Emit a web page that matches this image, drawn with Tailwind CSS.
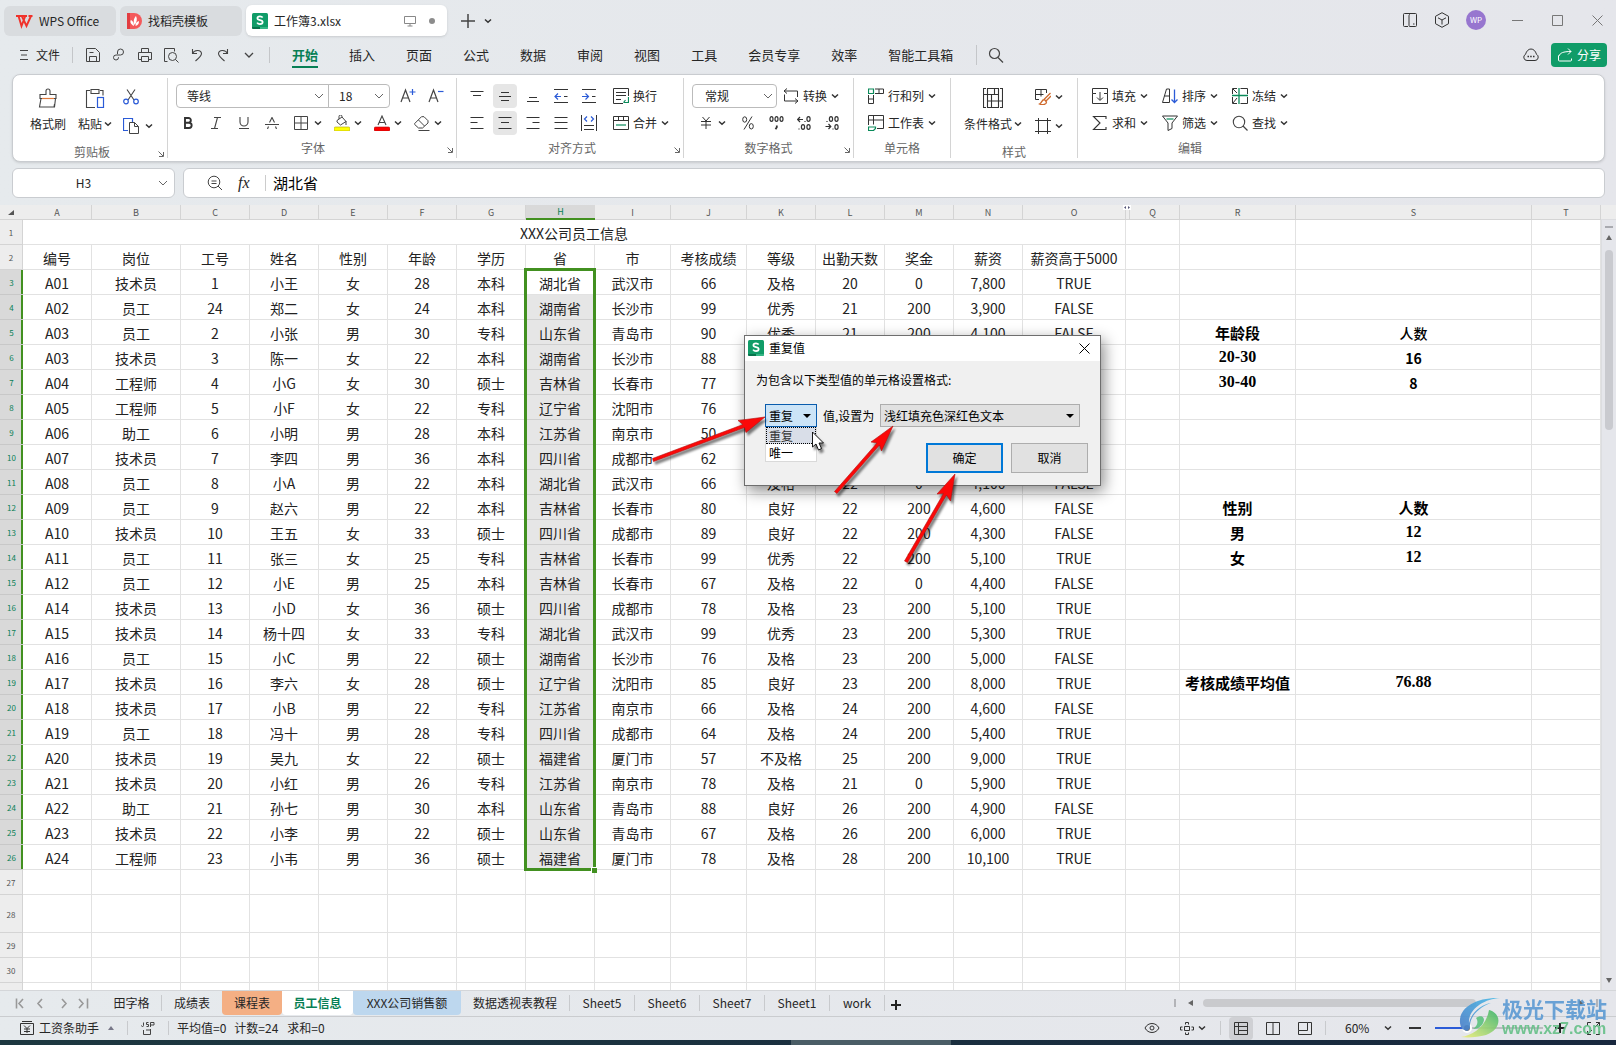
<!DOCTYPE html>
<html lang="zh-CN">
<head>
<meta charset="utf-8">
<title>工作簿3.xlsx - WPS Office</title>
<script src="https://cdn.jsdelivr.net/npm/@tailwindcss/browser@4"></script>
</head>
<body class="relative flex h-screen flex-col overflow-hidden bg-linear-to-r from-[#e6eaed] to-[#e5e6eb] font-['Noto_Sans_CJK_SC',sans-serif] text-xs text-[#262626]">

<svg class="hidden">
  <symbol id="dn" viewBox="0 0 8 8"><path d="M1 2.500 4 5.300 7 2.500" fill="none" stroke="#333" stroke-width="1.500"/></symbol>
  <symbol id="chev" viewBox="0 0 10 10"><path d="M1 3 5 7 9 3" fill="none" stroke="#666" stroke-width="1"/></symbol>
  <symbol id="launch" viewBox="0 0 8 8"><path d="M1.500 1.500 6 6M6.500 2v4.500H2" fill="none" stroke="#666"/></symbol>
  <symbol id="wpss" viewBox="0 0 16 16"><rect width="16" height="16" rx="1.500" fill="#109c68"/><path d="M0 14h8v2H1.500A1.500 1.500 0 0 1 0 14.500Z" fill="#06744b"/><path d="M8 14h8v.5a1.500 1.500 0 0 1-1.500 1.500H8Z" fill="#35b685"/><path d="M10.700 4.600C10 3.700 9.100 3.300 8 3.300c-1.500 0-2.600.7-2.600 1.900 0 2.600 5.300 1.200 5.300 3.900 0 1.200-1.200 2-2.700 2-1.300 0-2.300-.5-2.900-1.500" fill="none" stroke="#fff" stroke-width="1.700"/></symbol>
</svg>

<!-- Title bar -->
<header class="flex h-9 shrink-0 items-end pl-1">
  <button class="mr-1 flex h-[30px] w-28 items-center rounded-md bg-[#d9dcdf] pl-3">
    <svg class="mr-[6px] h-4 w-[17px]" viewBox="0 0 17 16"><path d="M0 3h11M12.500 3h4M2.500 3l3 10L9.300 3M5.800 3l4.700 10L15 3" fill="none" stroke="#f0322b" stroke-width="1.900"/></svg>WPS Office
  </button>
  <button class="mr-1 flex h-[30px] w-[122px] items-center rounded-md bg-[#d9dcdf] pl-[7px]">
    <svg class="mr-[6px] h-4 w-[15px]" viewBox="0 0 15 16"><path d="M0 0h7a8 8 0 0 1 0 16H0Z" fill="#f4595b"/><path d="M0 0h3v16H0Z" fill="#e23c40"/><path d="M7 13C3 11 3 8 4 7c2 1 3 3 3 6Zm.500-1C6 8 7 5 9 3c1.500 3 1 6-1.500 9Zm1 1c0-3 1-4 3.500-5 0 3-1 4-3.500 5Z" fill="#fff"/></svg>找稻壳模板
  </button>
  <div class="flex h-[31px] w-[201px] items-center rounded-md bg-white pl-[6px] shadow">
    <svg class="mr-[6px] h-4 w-4"><use href="#wpss"/></svg>
    <span class="flex-1">工作簿3.xlsx</span>
    <svg class="mr-[13px] h-3 w-3" viewBox="0 0 12 12"><path d="M.5 1.500h11v7H.5ZM6 8.500v2.500M3.500 11h5" fill="none" stroke="#888"/></svg>
    <span class="mr-3 h-[6px] w-[6px] rounded-full bg-[#8c8c8c]"></span>
  </div>
  <button class="ml-[14px] flex h-[30px] items-center" aria-label="新建">
    <svg class="h-[14px] w-[14px]" viewBox="0 0 14 14"><path d="M7 0v14M0 7h14" stroke="#444" stroke-width="1.500"/></svg>
    <svg class="ml-[9px] h-2 w-2"><use href="#dn"/></svg>
  </button>
  <div class="ml-auto mb-[1px] flex h-[30px] items-center pr-[13px]">
    <svg class="mr-4 h-4 w-4" viewBox="0 0 16 16"><path d="M6 14.500H2.500a1 1 0 0 1-1-1v-11a1 1 0 0 1 1-1h11a1 1 0 0 1 1 1v11a1 1 0 0 1-1 1H8a1 1 0 0 1-1-1v-10a1 1 0 0 1 1-1M11 12h1.500" fill="none" stroke="#333"/></svg>
    <svg class="mr-4 h-4 w-4" viewBox="0 0 16 16"><path d="M8 .7 14.500 4.300v7.400L8 15.300 1.500 11.700V4.300ZM4 5.800l4 2.200 4-2.200M8 8v4.500" fill="none" stroke="#333"/></svg>
    <span class="mr-[26px] flex h-5 w-5 items-center justify-center rounded-full bg-[#9776cf] text-[8px] text-white">WP</span>
    <svg class="mr-[29px] h-[11px] w-[11px]" viewBox="0 0 11 11"><path d="M0 5.500h11" stroke="#777"/></svg>
    <svg class="mr-[29px] h-[11px] w-[11px]" viewBox="0 0 11 11"><path d="M.5.5h10v10H.5Z" fill="none" stroke="#777"/></svg>
    <svg class="h-[11px] w-[11px]" viewBox="0 0 11 11"><path d="m.5.5 10 10m0-10-10 10" stroke="#777"/></svg>
  </div>
</header>

<!-- Menu bar -->
<div class="flex h-[38px] shrink-0 items-center pl-5">
  <button class="flex items-center gap-2"><svg class="h-3 w-2" viewBox="0 0 8 12"><path d="M0 1.500h8M1 6h6M0 10.500h8" stroke="#444"/></svg>文件</button>
  <span class="ml-[12px] mr-[7px] h-4 w-px bg-[#c4c6c9]"></span>
  <button class="flex w-[26px] justify-center" aria-label="保存"><svg class="h-4 w-4" viewBox="0 0 16 16"><path d="M1.500 14.500v-13h9l4 4v9ZM4.500 14v-4.500h7V14M4.500 5.500h4" fill="none" stroke="#444"/></svg></button>
  <button class="flex w-[26px] justify-center" aria-label="输出"><svg class="h-[14px] w-[14px]" viewBox="0 0 14 14"><path d="M5.500 6V4a3 3 0 1 1 3 3h-4.500a2.500 2.500 0 1 0 2.500 2.500V9" fill="none" stroke="#444"/></svg></button>
  <button class="flex w-[26px] justify-center" aria-label="打印"><svg class="h-4 w-4" viewBox="0 0 16 16"><path d="M4.500 5V1.500h7V5M4.500 12.500h-3V5.500h13v7h-3M4.500 9.500h7v5h-7Z" fill="none" stroke="#444"/></svg></button>
  <button class="flex w-[26px] justify-center" aria-label="打印预览"><svg class="h-4 w-4" viewBox="0 0 16 16"><path d="M4.500 14.500h-3v-13h10v3" fill="none" stroke="#444"/><circle cx="9.500" cy="9.500" r="4" fill="none" stroke="#444"/><path d="m12.500 12.500 3 3" stroke="#444"/></svg></button>
  <button class="flex w-[26px] justify-center" aria-label="撤销"><svg class="h-[14px] w-[14px]" viewBox="0 0 14 14"><path d="M2.500 1v4.500H7M2.500 5.500C4 2 11 1 11.500 5.500 11.500 8 9 10 5.500 13" fill="none" stroke="#444" stroke-width="1.100"/></svg></button>
  <button class="flex w-[26px] justify-center" aria-label="恢复"><svg class="h-[14px] w-[14px]" viewBox="0 0 14 14"><path d="M11.500 1v4.500H7M11.500 5.500C10 2 3 1 2.500 5.500 2.500 8 5 10 8.500 13" fill="none" stroke="#444" stroke-width="1.100"/></svg></button>
  <button class="flex w-[26px] justify-center" aria-label="更多"><svg class="h-[10px] w-[10px]" viewBox="0 0 10 10"><path d="M1 3 5 7 9 3" fill="none" stroke="#444" stroke-width="1.300"/></svg></button>
  <span class="ml-[7px] h-4 w-px bg-[#c4c6c9]"></span>
  <nav class="ml-[22px] flex gap-[31px] text-[13px] leading-[26px]">
    <a href="#" class="font-bold text-[#087f55] shadow-[inset_0_-2px_0_#087f55]">开始</a>
    <a href="#">插入</a><a href="#">页面</a><a href="#">公式</a><a href="#">数据</a><a href="#">审阅</a><a href="#">视图</a><a href="#">工具</a><a href="#">会员专享</a><a href="#">效率</a><a href="#">智能工具箱</a>
  </nav>
  <span class="ml-[23px] h-5 w-px bg-[#c4c6c9]"></span>
  <button class="ml-[11px] flex" aria-label="搜索"><svg class="h-4 w-4" viewBox="0 0 16 16"><circle cx="6.500" cy="6.500" r="5" fill="none" stroke="#444" stroke-width="1.200"/><path d="m10 10.500 5 5" stroke="#444" stroke-width="1.200"/></svg></button>
  <div class="ml-auto flex items-center pr-[9px]">
    <svg class="mr-3 h-[14px] w-4" viewBox="0 0 16 14"><path d="M4 12.500a3.300 3.300 0 0 1-1.500-6.200C3.500 3 5.500 1 8 1s4.500 2 5.500 5.300A3.300 3.300 0 0 1 12 12.500Z" fill="none" stroke="#333"/><path d="M4.500 8.500h1.500M7.200 8.500h1.500M10 8.500h1.500" stroke="#333" stroke-width="1.500"/></svg>
    <button class="flex h-6 w-14 items-center gap-[5px] rounded bg-[#109c68] pl-[7px] text-white"><svg class="h-[14px] w-[14px]" viewBox="0 0 14 14"><path d="M.5 7.500V12a1 1 0 0 0 1 1h11a1 1 0 0 0 1-1v-1.500M1 8c1-3 4-4.500 12-4.500M10 .5l3 3-3 3" fill="none" stroke="#fff"/></svg>分享</button>
  </div>
</div>

<!-- Ribbon -->
<section class="ml-3 mr-[11px] flex h-[88px] shrink-0 rounded-lg border border-[#c9ccd0] bg-white shadow-sm">
  <div class="my-[3px] flex w-[155px] flex-col border-r border-[#d4d4d4] pt-[6px]">
    <div class="flex h-[55px] pl-[13px]">
      <button class="flex w-11 flex-col items-center pt-1"><svg class="h-5 w-5" viewBox="0 0 20 20"><path d="M8 6.500V3a2 2 0 0 1 4 0v3.500h6v4H2v-4ZM3 10.500 1.500 19h15l1-8.500M16 19l.500-3" fill="none" stroke="#444" stroke-width="1.100"/><path d="M4 10.500h12" stroke="#e07a3c" stroke-width="1.200"/></svg><span class="mt-2">格式刷</span></button>
      <button class="ml-[6px] flex w-[38px] flex-col items-center pt-1"><svg class="h-5 w-5" viewBox="0 0 20 20"><path d="M5 2.500H1.500v17H10M15 2.500h3v5M6 1.500h8v4H6Z" fill="none" stroke="#444" stroke-width="1.100"/><rect x="12.500" y="9.500" width="6" height="10" fill="none" stroke="#2b5bd7" stroke-width="1.200"/></svg><span class="mt-2 flex items-center gap-[2px]">粘贴<svg class="h-2 w-2"><use href="#dn"/></svg></span></button>
      <div class="ml-[9px] flex flex-col gap-[3px]">
        <button class="flex h-[26px] items-center" aria-label="剪切"><svg class="h-4 w-4" viewBox="0 0 16 16"><path d="M4 .5 11 11M12 .5 5 11" stroke="#444" stroke-width="1.100"/><g fill="none" stroke="#2b5bd7" stroke-width="1.200"><circle cx="3" cy="12.500" r="2.300"/><circle cx="13" cy="12.500" r="2.300"/></g></svg></button>
        <button class="flex h-[26px] items-center gap-[6px]" aria-label="复制"><svg class="h-4 w-4" viewBox="0 0 16 16"><path d="M5 12.500H.5V.5h9V4" fill="none" stroke="#2b5bd7" stroke-width="1.200"/><path d="M6.500 4.500h5l4 4v7h-9ZM11.500 4.500v4h4" fill="none" stroke="#444"/></svg><svg class="h-2 w-2"><use href="#dn"/></svg></button>
      </div>
    </div>
    <div class="mt-[3px] flex items-center text-[#666]"><span class="w-4"></span><span class="flex-1 text-center leading-5">剪贴板</span><svg class="mt-1 h-2 w-3"><use href="#launch"/></svg></div>
  </div>

  <div class="my-[3px] flex w-[289px] flex-col border-r border-[#d4d4d4] pl-[6px] pt-[6px]">
    <div class="mb-[3px] flex h-[26px] items-center pl-[2px]">
      <label class="flex h-6 w-[153px] items-center rounded-l border border-[#bbb] pr-1"><select aria-label="字体" class="flex-1 appearance-none pl-[10px]"><option>等线</option></select><svg class="h-[10px] w-[10px]"><use href="#chev"/></svg></label>
      <label class="-ml-px flex h-6 w-[62px] items-center rounded-r border border-[#bbb] pr-[5px]"><select aria-label="字号" class="flex-1 appearance-none pl-[10px]"><option>18</option></select><svg class="h-[10px] w-[10px]"><use href="#chev"/></svg></label>
      <button class="ml-1 flex w-7 justify-center" aria-label="增大字号"><svg class="h-4 w-4" viewBox="0 0 16 16"><path d="m1 14 4.500-12L10 14M2.500 10h6" fill="none" stroke="#444" stroke-width="1.200"/><path d="M12.500 1v6M9.500 4h6" stroke="#2b5bd7" stroke-width="1.200"/></svg></button>
      <button class="flex w-7 justify-center" aria-label="减小字号"><svg class="h-4 w-4" viewBox="0 0 16 16"><path d="m1 14 4.500-12L10 14M2.500 10h6" fill="none" stroke="#444" stroke-width="1.200"/><path d="M10 3.500h5.500" stroke="#2b5bd7" stroke-width="1.200"/></svg></button>
    </div>
    <div class="flex h-[26px] items-center">
      <button class="flex w-7 justify-center" aria-label="加粗"><svg class="h-3 w-3" viewBox="0 0 12 12"><path d="M3 1h3.500a2.300 2.300 0 0 1 0 4.700H3ZM3 5.700h4a2.600 2.600 0 0 1 0 5.300H3Z" fill="none" stroke="#333" stroke-width="1.900"/></svg></button>
      <button class="flex w-7 justify-center" aria-label="倾斜"><svg class="h-3 w-3" viewBox="0 0 12 12"><path d="M4 .5h7M1 11.500h7M7.500.5l-3 11" stroke="#444" stroke-width="1.100"/></svg></button>
      <button class="flex w-7 justify-center" aria-label="下划线"><svg class="h-3 w-3" viewBox="0 0 12 12"><path d="M2 0v5a4 4 0 0 0 8 0V0M1 11.500h10" fill="none" stroke="#444" stroke-width="1.100"/></svg></button>
      <button class="flex w-7 justify-center" aria-label="删除线"><svg class="h-3 w-[14px]" viewBox="0 0 14 12"><path d="M0 7.500h14M4.500 5.500 7 .5l2.500 5M3.500 9.500 2.500 12M10.500 9.500l1 2.500" fill="none" stroke="#444" stroke-width="1.100"/></svg></button>
      <button class="ml-1 flex w-8 items-center pl-1" aria-label="边框"><svg class="mr-[6px] h-[14px] w-[14px] shrink-0" viewBox="0 0 14 14"><path d="M.5.5h13v13H.5ZM7 .5v13M.5 7h13" fill="none" stroke="#444"/></svg><svg class="h-2 w-2 shrink-0"><use href="#dn"/></svg></button>
      <button class="ml-2 flex w-8 items-center pl-1" aria-label="填充颜色"><svg class="mr-1 h-4 w-4 shrink-0" viewBox="0 0 16 16"><path d="M3 5.500 8 2l4 4.500L6.500 10 3 7ZM5 4V1.500a1.500 1.500 0 0 1 3 0V2M12 6v4" fill="none" stroke="#444"/><rect y="12" width="16" height="4" rx="1.500" fill="#ff0" stroke="#a99a10" stroke-width=".6"/></svg><svg class="h-2 w-2 shrink-0"><use href="#dn"/></svg></button>
      <button class="ml-2 flex w-8 items-center pl-1" aria-label="字体颜色"><svg class="mr-1 h-4 w-4 shrink-0" viewBox="0 0 16 16"><path d="m4 10 4-9 4 9M5.500 7.500h5" fill="none" stroke="#444" stroke-width="1.100"/><rect y="12" width="16" height="4" rx="1.500" fill="#f00" stroke="#a11" stroke-width=".6"/></svg><svg class="h-2 w-2 shrink-0"><use href="#dn"/></svg></button>
      <button class="ml-2 flex w-8 items-center pl-1" aria-label="清除"><svg class="mr-1 h-4 w-4 shrink-0" viewBox="0 0 16 16"><path d="M.7 8.500 7.500 1.700h2.500L14 5.700V8L8.500 13H4.500L.7 9.500ZM4.500 5l6 6M4.500 15.500h11" fill="none" stroke="#444"/></svg><svg class="h-2 w-2 shrink-0"><use href="#dn"/></svg></button>
    </div>
    <div class="mt-[3px] flex items-center text-[#666]"><span class="w-2"></span><span class="flex-1 text-center leading-5">字体</span><svg class="mt-1 h-2 w-3"><use href="#launch"/></svg></div>
  </div>

  <div class="my-[3px] flex w-[227px] flex-col border-r border-[#d4d4d4] pl-2 pt-[6px]">
    <div class="mb-[3px] flex h-[26px] items-center gap-1">
      <button class="flex h-6 w-6 items-center justify-center" aria-label="顶端对齐"><svg class="h-[14px] w-[14px]" viewBox="0 0 14 14"><path d="M.5 2.500h13M3 6.500h8" stroke="#333"/></svg></button>
      <button class="flex h-6 w-6 items-center justify-center rounded bg-[#e6e6e6]" aria-label="垂直居中"><svg class="h-[14px] w-[14px]" viewBox="0 0 14 14"><path d="M3 3.500h8M1 7.500h12M3 11.500h8" stroke="#333"/></svg></button>
      <button class="flex h-6 w-6 items-center justify-center" aria-label="底端对齐"><svg class="h-[14px] w-[14px]" viewBox="0 0 14 14"><path d="M3 8.500h8M1 12.500h12" stroke="#333"/></svg></button>
      <button class="flex h-6 w-6 items-center justify-center" aria-label="减少缩进"><svg class="h-[14px] w-[14px]" viewBox="0 0 14 14"><path d="M0 .5h14M0 13.500h14M10 7.500h3.500" stroke="#333"/><path d="M7 7.500H.5M4 4.500l-3 3 3 3" fill="none" stroke="#2b5bd7" stroke-width="1.200"/></svg></button>
      <button class="flex h-6 w-6 items-center justify-center" aria-label="增加缩进"><svg class="h-[14px] w-[14px]" viewBox="0 0 14 14"><path d="M0 .5h14M0 13.500h14M10 7.500h3.500" stroke="#333"/><path d="M0 7.500h6.500M3.500 4.500l3 3-3 3" fill="none" stroke="#2b5bd7" stroke-width="1.200"/></svg></button>
      <button class="ml-2 flex items-center gap-1"><svg class="h-4 w-4" viewBox="0 0 16 16"><path d="M15.500 8V.5H.5v15H10M3 4.500h10M3 7.500h10M3 11.500h5" fill="none" stroke="#333"/><path d="M15.500 9v5.500h-5M12.500 12l-2 2.500" fill="none" stroke="#0a8a5a" stroke-width="1.200"/></svg>换行</button>
    </div>
    <div class="flex h-[26px] items-center gap-1">
      <button class="flex h-6 w-6 items-center justify-center" aria-label="左对齐"><svg class="h-[14px] w-[14px]" viewBox="0 0 14 14"><path d="M.5 1.500h13M.5 6.500h7M.5 12.500h13" stroke="#333"/></svg></button>
      <button class="flex h-6 w-6 items-center justify-center rounded bg-[#e6e6e6]" aria-label="水平居中"><svg class="h-[14px] w-[14px]" viewBox="0 0 14 14"><path d="M.5 1.500h13M3 6.500h8M.5 12.500h13" stroke="#333"/></svg></button>
      <button class="flex h-6 w-6 items-center justify-center" aria-label="右对齐"><svg class="h-[14px] w-[14px]" viewBox="0 0 14 14"><path d="M.5 1.500h13M6.500 6.500h7M.5 12.500h13" stroke="#333"/></svg></button>
      <button class="flex h-6 w-6 items-center justify-center" aria-label="两端对齐"><svg class="h-[14px] w-[14px]" viewBox="0 0 14 14"><path d="M.5 1.500h13M.5 6.500h13M.5 12.500h13" stroke="#333"/></svg></button>
      <button class="flex h-6 w-6 items-center justify-center" aria-label="分散对齐"><svg class="h-4 w-4" viewBox="0 0 16 16"><path d="M.5 0v16M15.500 0v16M3 10.500h10M3 14.500h10" stroke="#333"/><path d="M6 1.500 3.500 4 6 6.500M10 1.500 12.500 4 10 6.500" fill="none" stroke="#2b5bd7" stroke-width="1.200"/></svg></button>
      <button class="ml-2 flex items-center gap-1"><svg class="h-4 w-4" viewBox="0 0 16 16"><path d="M.5 1.500h15v13H.5ZM.5 5.500h15M5.500 1.500v4M10.500 1.500v4" fill="none" stroke="#333"/><path d="M3 10h10" stroke="#0a8a5a" stroke-width="1.200"/></svg>合并<svg class="h-2 w-2"><use href="#dn"/></svg></button>
    </div>
    <div class="mt-[3px] flex items-center text-[#666]"><span class="w-2"></span><span class="flex-1 text-center leading-5">对齐方式</span><svg class="mt-1 h-2 w-3"><use href="#launch"/></svg></div>
  </div>

  <div class="my-[3px] flex w-[170px] flex-col border-r border-[#d4d4d4] pl-2 pt-[6px]">
    <div class="mb-[3px] flex h-[26px] items-center">
      <label class="flex h-6 w-[85px] items-center rounded border border-[#bbb] pr-[3px]"><select aria-label="数字格式" class="min-w-0 flex-1 appearance-none pl-3"><option>常规</option></select><svg class="h-[10px] w-[10px]"><use href="#chev"/></svg></label>
      <button class="ml-[6px] flex items-center gap-1"><svg class="h-4 w-4" viewBox="0 0 16 16"><path d="M4 .5l-3 2.500 3 2.500M1 3h13.500v6M1.500 6.500v6.500H15M12 10.500l3 2.500-3 2.500" fill="none" stroke="#333"/></svg>转换<svg class="h-2 w-2"><use href="#dn"/></svg></button>
    </div>
    <div class="flex h-[26px] items-center">
      <button class="flex w-8 items-center pl-2" aria-label="货币"><svg class="mr-[6px] h-3 w-3 shrink-0" viewBox="0 0 12 12"><path d="M2.500 0 6 4l3.500-4M1 4.500h10M1 8h10M6 4v8" fill="none" stroke="#333"/></svg><svg class="h-2 w-2 shrink-0"><use href="#dn"/></svg></button>
      <button class="ml-3 flex w-6 justify-center" aria-label="百分比"><svg class="h-[14px] w-3" viewBox="0 0 12 14"><path d="M10 .5 2 13.500" stroke="#333"/><ellipse cx="2.700" cy="3.500" rx="2" ry="2.700" fill="none" stroke="#333"/><ellipse cx="9.300" cy="10.300" rx="2" ry="2.700" fill="none" stroke="#333"/></svg></button>
      <button class="ml-1 flex w-6 justify-center" aria-label="千位分隔"><svg class="h-[14px] w-[15px]" viewBox="0 0 15 14"><g fill="none" stroke="#333" stroke-width="1.200"><ellipse cx="2.500" cy="3" rx="1.500" ry="2.300"/><ellipse cx="7.500" cy="3" rx="1.500" ry="2.300"/><ellipse cx="12.500" cy="3" rx="1.500" ry="2.300"/><path d="M7.800 9.500v1.700l-1.300 2" stroke-width="1.800"/></g></svg></button>
      <button class="ml-1 flex w-6 justify-center" aria-label="增加小数"><svg class="h-[14px] w-[14px]" viewBox="0 0 14 14"><g fill="none" stroke="#333" stroke-width="1.200"><path d="M6 3.500H.5M3 1 .7 3.500 3 6M8 5v1M2 12.500v1"/><ellipse cx="11.500" cy="3" rx="1.600" ry="2.400"/><ellipse cx="6" cy="11" rx="1.600" ry="2.400"/><ellipse cx="11.500" cy="11" rx="1.600" ry="2.400"/></g></svg></button>
      <button class="ml-1 flex w-6 justify-center" aria-label="减少小数"><svg class="h-[14px] w-[14px]" viewBox="0 0 14 14"><g fill="none" stroke="#333" stroke-width="1.200"><path d="M.5 10.500H6M3.500 8l2.300 2.500L3.500 13M8 12.500v1M2 5v1"/><ellipse cx="6" cy="3" rx="1.600" ry="2.400"/><ellipse cx="11.500" cy="3" rx="1.600" ry="2.400"/><ellipse cx="11.500" cy="11" rx="1.600" ry="2.400"/></g></svg></button>
    </div>
    <div class="mt-[3px] flex items-center text-[#666]"><span class="w-1"></span><span class="flex-1 text-center leading-5">数字格式</span><svg class="mt-1 h-2 w-3"><use href="#launch"/></svg></div>
  </div>

  <div class="my-[3px] flex w-[97px] flex-col border-r border-[#d4d4d4] pt-[6px]">
    <button class="mb-[3px] ml-[14px] flex h-[26px] items-center gap-1"><svg class="h-4 w-4" viewBox="0 0 16 16"><path d="M.5 1h5v4.500h-5Z" fill="none" stroke="#0a8a5a" stroke-width="1.200"/><path d="M7 1h8.500v4.500H7M11 1v4.500M.5 7v8.500h5V7M.5 11h5" fill="none" stroke="#333"/></svg>行和列<svg class="h-2 w-2"><use href="#dn"/></svg></button>
    <button class="ml-[14px] flex h-[26px] items-center gap-1"><svg class="h-4 w-4" viewBox="0 0 16 16"><path d="M.5 10V.5h15v13H9M.5 5h15M5.500.5v9" fill="none" stroke="#333"/><path d="M.5 12h7v1.500l-2 2h-5Z" fill="none" stroke="#0a8a5a" stroke-width="1.200"/></svg>工作表<svg class="h-2 w-2"><use href="#dn"/></svg></button>
    <div class="mt-[3px] text-center leading-5 text-[#666]">单元格</div>
  </div>

  <div class="my-[3px] flex w-[127px] flex-col border-r border-[#d4d4d4] pt-[6px]">
    <div class="flex h-[55px] pl-[13px]">
      <button class="flex flex-col items-center pt-1"><svg class="h-5 w-5" viewBox="0 0 20 20"><path d="M3 .5H.5v19H3M17 .5h2.500v19H17M4.500.5h11v19h-11ZM.5 6.500h11v-6M4.500 13h15M8.500 6.500V13M15.500 6.500h-4M8.500 13v6" fill="none" stroke="#333" stroke-width="1.100"/></svg><span class="mt-2 flex items-center gap-[2px]">条件格式<svg class="h-2 w-2"><use href="#dn"/></svg></span></button>
      <div class="ml-[13px] flex flex-col gap-[3px]">
        <button class="flex h-[26px] items-center gap-1" aria-label="表格样式"><svg class="h-4 w-4" viewBox="0 0 16 16"><path d="M4 10.500H.5V.5h11V4M.5 5.500h8M6 .5v7" fill="none" stroke="#333"/><path d="M15.500 4 9 10.500M16 7l-5 5M9.500 10.500c-3 0-2 3-5 4.500 3 1.500 7 .5 7-2Z" fill="none" stroke="#cf6a2d" stroke-width="1.300"/></svg><svg class="h-2 w-2"><use href="#dn"/></svg></button>
        <button class="flex h-[26px] items-center gap-1" aria-label="单元格样式"><svg class="h-4 w-4" viewBox="0 0 16 16"><path d="M3.500 0v16M12.500 0v16M0 2.500h16M0 13.500h16" stroke="#333"/></svg><svg class="h-2 w-2"><use href="#dn"/></svg></button>
      </div>
    </div>
    <div class="mt-[3px] text-center leading-5 text-[#666]">样式</div>
  </div>

  <div class="my-[3px] flex flex-col pl-[14px] pt-[6px]">
    <div class="mb-[3px] flex h-[26px] items-center gap-[14px]">
      <button class="flex items-center gap-1"><svg class="h-4 w-4" viewBox="0 0 16 16"><path d="M4 5.500H.5V.5h15v5H12M.5 5.500v10h15v-10M8 4v8M5 9.500l3 3 3-3" fill="none" stroke="#333"/></svg>填充<svg class="h-2 w-2"><use href="#dn"/></svg></button>
      <button class="flex items-center gap-1"><svg class="h-4 w-4" viewBox="0 0 16 16"><path d="M.5 14.500h7V1H4.500ZM2.500 8h5" fill="none" stroke="#333"/><path d="M12.500 1.500v13M9.500 11.500l3 3 3-3" fill="none" stroke="#2b5bd7" stroke-width="1.300"/></svg>排序<svg class="h-2 w-2"><use href="#dn"/></svg></button>
      <button class="flex items-center gap-1"><svg class="h-4 w-4" viewBox="0 0 16 16"><path d="M5 .5H.5V6M8.500.5h7V6M.5 9v6.500H5M8.500 15.500h7V9M1 1l4 4M1 15l4-5" fill="none" stroke="#333"/><path d="M7 0v16M0 7.500h16" stroke="#0a8a5a" stroke-width="1.300"/></svg>冻结<svg class="h-2 w-2"><use href="#dn"/></svg></button>
    </div>
    <div class="flex h-[26px] items-center gap-[14px]">
      <button class="flex items-center gap-1"><svg class="h-4 w-4" viewBox="0 0 16 16"><path d="M14 4V1.500H1.500L8 8l-6.500 6.500H14V12" fill="none" stroke="#333" stroke-width="1.100"/></svg>求和<svg class="h-2 w-2"><use href="#dn"/></svg></button>
      <button class="flex items-center gap-1"><svg class="h-4 w-4" viewBox="0 0 16 16"><path d="M.5 1h15l-5.500 7v5.500L6 15.500V8Z" fill="none" stroke="#333"/><path d="M4.500 4h7" stroke="#0a8a5a" stroke-width="1.200"/></svg>筛选<svg class="h-2 w-2"><use href="#dn"/></svg></button>
      <button class="flex items-center gap-1"><svg class="h-4 w-4" viewBox="0 0 16 16"><circle cx="7" cy="7" r="5.700" fill="none" stroke="#444" stroke-width="1.100"/><path d="m11 11 4.500 4.500" stroke="#444" stroke-width="1.200"/></svg>查找<svg class="h-2 w-2"><use href="#dn"/></svg></button>
    </div>
    <div class="mt-[3px] text-center leading-5 text-[#666]">编辑</div>
  </div>
</section>

<!-- Name box and formula bar -->
<div class="ml-3 mr-[11px] mt-[6px] flex h-[30px] shrink-0 gap-2">
  <label class="flex w-[163px] items-center rounded-md border border-[#c9ccd0] bg-white pr-[6px]"><input aria-label="名称框" value="H3" class="min-w-0 flex-1 pr-1 text-center"><svg class="h-[10px] w-[10px]"><use href="#chev"/></svg></label>
  <div class="flex flex-1 items-center rounded-md border border-[#c9ccd0] bg-white pl-[23px]">
    <svg class="h-4 w-4" viewBox="0 0 16 16"><circle cx="7" cy="7" r="5.800" fill="none" stroke="#444"/><path d="m11 11 4 4M4.500 6h5M4.500 8.500h5" stroke="#444"/></svg>
    <span class="ml-[15px] w-4 font-['Liberation_Serif',serif] text-base italic">fx</span>
    <span class="ml-[11px] h-4 w-px bg-[#ccc]"></span>
    <input aria-label="编辑栏" value="湖北省" class="ml-[7px] min-w-0 flex-1 text-[15px] text-black">
  </div>
</div>

<!-- Worksheet -->
<main class="mt-[7px] flex min-h-0 flex-1 bg-white">
  <div class="relative min-w-0 flex-1 overflow-hidden">
    <table class="w-full table-fixed border-separate border-spacing-0 text-center">
      <colgroup id="cols"></colgroup>
      <thead><tr id="heads"></tr></thead>
      <tbody id="grid"></tbody>
    </table>
    <div class="pointer-events-none absolute left-[524px] top-[63px] h-[603px] w-[72px] border-[3px] border-[#429020]"></div>
    <span class="absolute left-[591px] top-[662px] h-[6px] w-[6px] border-l border-t border-white bg-[#429020]"></span>
    <span class="absolute left-[1129px] top-0 h-[14px] w-px bg-[#d4d4d4]"></span>
    <svg class="absolute left-[1123px] top-0 h-[5px] w-[8px]" viewBox="0 0 8 5"><path d="M0 0h8v5H0Z" fill="#fff"/><path d="M3 1v3L1 2.500ZM5 1v3l2-1.500Z" fill="#557"/></svg>
  </div>
  <div class="flex w-[15px] flex-col items-center bg-[#ededed]">
    <span class="h-[14px]"></span>
    <div class="flex w-full flex-1 flex-col items-center border-l border-t border-[#dcdde0] bg-[#e5e6eb]">
      <span class="mt-[6px] h-[2px] w-2 bg-[#a9aab0]"></span>
      <svg class="mt-[7px] h-[6px] w-[6px]" viewBox="0 0 6 6"><path d="M3 0 6 5H0Z" fill="#666"/></svg>
      <span class="mt-[9px] h-[180px] w-2 rounded-full bg-[#c9cacf]"></span>
      <svg class="mb-[7px] mt-auto h-[6px] w-[6px]" viewBox="0 0 6 6"><path d="M3 6 6 1H0Z" fill="#666"/></svg>
    </div>
  </div>
</main>

<!-- Sheet tabs -->
<div class="flex h-[26px] shrink-0 items-start border-t border-[#d4d6d9] leading-6">
  <svg class="ml-[15px] mt-[7px] h-[11px] w-[76px]" viewBox="0 0 76 11"><path d="M1.500.5v10M8 1 4 5.500 8 10M27 1l-4 4.500 4 4.500M47 1l4 4.500L47 10M64 1l4 4.500L64 10M72.500.5v10" fill="none" stroke="#999" stroke-width="1.600"/></svg>
  <div class="ml-[11px] flex h-6 text-center">
    <button class="w-[59px]">田字格</button><span class="mt-1 h-4 w-px bg-[#c8cacd]"></span>
    <button class="w-[60px]">成绩表</button>
    <button class="w-[60px] rounded-b bg-[#f4af84]">课程表</button>
    <button class="w-[71px] rounded-b bg-white font-bold text-[#087f55]">员工信息</button>
    <button class="w-[108px] rounded-b bg-[#bdd7ee]">XXX公司销售额</button>
    <button class="w-[108px]">数据透视表教程</button><span class="mt-1 h-4 w-px bg-[#c8cacd]"></span>
    <button class="w-16">Sheet5</button><span class="mt-1 h-4 w-px bg-[#c8cacd]"></span>
    <button class="w-16">Sheet6</button><span class="mt-1 h-4 w-px bg-[#c8cacd]"></span>
    <button class="w-16">Sheet7</button><span class="mt-1 h-4 w-px bg-[#c8cacd]"></span>
    <button class="w-16">Sheet1</button><span class="mt-1 h-4 w-px bg-[#c8cacd]"></span>
    <button class="w-[54px]">work</button><span class="mt-1 h-4 w-px bg-[#c8cacd]"></span>
    <button class="flex w-[22px] items-center justify-center" aria-label="新建工作表"><svg class="mt-1 h-[10px] w-[10px]" viewBox="0 0 10 10"><path d="M5 0v10M0 5h10" stroke="#222" stroke-width="2"/></svg></button>
  </div>
  <div class="ml-auto flex h-6 items-center pr-[18px]">
    <span class="mr-[12px] h-2 w-[2px] bg-[#b3b4b8]"></span>
    <svg class="mr-[9px] h-[6px] w-[6px]" viewBox="0 0 6 6"><path d="M0 3 5 0v6Z" fill="#666"/></svg>
    <span class="mr-[102px] h-2 w-[273px] rounded-full bg-[#c9cacd]"></span>
    <svg class="mr-[12px] h-[6px] w-[6px]" viewBox="0 0 6 6"><path d="M6 3 1 0v6Z" fill="#666"/></svg>
    <span class="h-2 w-[2px] bg-[#b3b4b8]"></span>
  </div>
</div>

<!-- Status bar -->
<footer class="flex h-6 shrink-0 items-center border-t border-[#cacccf] pb-px">
  <button class="ml-5 flex items-center gap-[5px]"><svg class="h-[14px] w-[14px]" viewBox="0 0 14 14"><path d="M2 .5h10M.5 2.500h13v11H.5ZM4 4.500l3 3 3-3M4 8h6M4 10.500h6M7 7.500V12" fill="none" stroke="#333"/></svg>工资条助手<svg class="ml-1 h-[4px] w-[6px]" viewBox="0 0 6 4"><path d="M3 0 6 4H0Z" fill="#778"/></svg></button>
  <span class="ml-[13px] h-[14px] w-px bg-[#c8cacd]"></span>
  <svg class="ml-[13px] h-[13px] w-[14px]" viewBox="0 0 14 13"><path d="M2.500.5v3a1 1 0 0 1-2 0M7.500.5h-2v2h2v2h-2M9.500 5V.5H13v2.500H9.500M2.500 8v4.500h7V7M5 8h4.500" fill="none" stroke="#444"/></svg>
  <span class="ml-[13px] h-[14px] w-px bg-[#c8cacd]"></span>
  <span class="ml-2">平均值=0</span><span class="ml-2">计数=24</span><span class="ml-[9px]">求和=0</span>
  <div class="ml-auto flex items-center pr-4">
    <svg class="h-3 w-4" viewBox="0 0 16 12"><path d="M1 6c3-6 11-6 14 0-3 6-11 6-14 0Z" fill="none" stroke="#333"/><circle cx="8" cy="6" r="2" fill="none" stroke="#333"/></svg>
    <svg class="ml-5 mr-[4px] h-[13px] w-[14px]" viewBox="0 0 14 13"><path d="M4.500 4.500h5v4h-5ZM5.500 2.500v-2h3v2M5.500 10.500v2h3v-2M2.500 5H.5v3h2M11.500 5h2v3h-2" fill="none" stroke="#333"/></svg><svg class="h-2 w-2"><use href="#dn"/></svg>
    <span class="ml-[14px] h-[14px] w-px bg-[#c8cacd]"></span>
    <span class="ml-2 flex h-[23px] w-6 items-center justify-center rounded bg-[#cfd0d4]"><svg class="h-[13px] w-[14px]" viewBox="0 0 14 13"><path d="M.5.5h13v12H.5ZM.5 4.500h13M4.500.5v12M4.500 8.500h9" fill="none" stroke="#333"/></svg></span>
    <svg class="ml-[13px] h-[13px] w-[14px]" viewBox="0 0 14 13"><path d="M.5.5h13v12H.5ZM7 .5v12" fill="none" stroke="#333"/></svg>
    <svg class="ml-[18px] h-[13px] w-[14px]" viewBox="0 0 14 13"><path d="M.5.5h9v8h-9ZM9.500.5h4v12H.5v-4" fill="none" stroke="#333"/></svg>
    <span class="ml-[13px] h-[14px] w-px bg-[#c8cacd]"></span>
    <span class="ml-[19px] w-[38px]">60%</span>
    <svg class="ml-[1px] h-2 w-2"><use href="#dn"/></svg>
    <span class="ml-[17px] h-[2px] w-3 bg-[#333]"></span>
    <input type="range" aria-label="缩放" min="0" max="100" value="28" class="ml-[14px] h-[2px] w-[108px] appearance-none bg-linear-to-r from-[#2b5bd7] from-28% to-[#bbbcc0] to-28% [&::-webkit-slider-thumb]:h-[10px] [&::-webkit-slider-thumb]:w-[10px] [&::-webkit-slider-thumb]:appearance-none [&::-webkit-slider-thumb]:rounded-full [&::-webkit-slider-thumb]:border-2 [&::-webkit-slider-thumb]:border-white [&::-webkit-slider-thumb]:bg-[#777]">
    <svg class="ml-[12px] h-[10px] w-[10px]" viewBox="0 0 10 10"><path d="M5 0v10M0 5h10" stroke="#222" stroke-width="2"/></svg>
    <svg class="ml-[22px] h-[13px] w-[13px]" viewBox="0 0 13 13"><path d="M.5 4V.5H4M9 .5h3.500V4M12.500 9v3.500H9M4 12.500H.5V9M8 5l4.500-4.500M5 8 .5 12.500" fill="none" stroke="#333"/></svg>
  </div>
</footer>
<div class="flex h-[5px] shrink-0 justify-center bg-linear-to-r from-[#1d3840] to-[#18283e]"><span class="ml-[126px] w-[160px] bg-[#4a5d66]"></span></div>

<!-- Site watermark -->
<div class="pointer-events-none absolute bottom-[7px] right-[9px] flex opacity-90">
  <svg class="h-[42px] w-[45px]" viewBox="0 0 45 42"><defs><linearGradient id="wb" x1="0" x2="1" y1="1" y2="0"><stop stop-color="#4a7cc7"/><stop offset="1" stop-color="#48bce8"/></linearGradient><linearGradient id="wg" x1="0" x2="1" y1="1" y2="0"><stop stop-color="#f2f07a"/><stop offset="1" stop-color="#3bb56c"/></linearGradient></defs><path d="M5 33C-3 18 12 1 43 2 26 3 11 14 12 27c3-12 14-19 22-20C20 12 12 22 13 32l-3 3Z" fill="url(#wb)"/><path d="M32 14c14 4 12 20-3 25-8 2-17 3-25 2 12-2 25-10 28-27Z" fill="url(#wg)"/><path d="M19 22c4-3 8-2 8 2-1 6-6 9-11 9 4-3 6-7 3-11Z" fill="#5cc27e"/></svg>
  <div class="flex flex-col">
    <span class="text-[21px] font-bold leading-6 text-[#5c9ad3]">极光下载站</span>
    <span class="font-['Liberation_Sans',sans-serif] text-base font-bold leading-[18px] text-[#66c088]">www.xz7.com</span>
  </div>
</div>

<!-- Duplicate values dialog -->
<div role="dialog" aria-label="重复值" class="absolute left-[744px] top-[335px] flex h-[151px] w-[357px] flex-col border border-[#6e6e6e] bg-[#f0f0f0] text-black shadow-[3px_5px_14px_rgba(0,0,0,0.45)]">
  <div class="flex h-[25px] shrink-0 items-center bg-white pb-px pl-[3px] pr-[10px]">
    <svg class="h-4 w-4"><use href="#wpss"/></svg><span class="ml-[5px] flex-1">重复值</span>
    <button aria-label="关闭"><svg class="h-[11px] w-[11px]" viewBox="0 0 11 11"><path d="m.5.5 10 10m0-10-10 10" stroke="#000"/></svg></button>
  </div>
  <p class="ml-[11px] mt-[11px] leading-4">为包含以下类型值的单元格设置格式:</p>
  <div class="ml-5 mt-4 flex h-[23px] items-center">
    <label class="relative flex h-full w-[52px] items-center border border-[#0a5cad] bg-[#cce4f7] pr-[5px]"><select aria-label="类型" class="min-w-0 flex-1 appearance-none pl-[3px]"><option>重复</option></select><svg class="h-1 w-2" viewBox="0 0 8 4"><path d="M0 0h8L4 4Z"/></svg>
      <span role="listbox" class="absolute -left-px top-[22px] block w-[52px] border-x border-b border-[#d9d9d9] bg-white leading-[17px]"><span role="option" class="block h-[17px] border border-dotted border-black bg-[#d9dee8] pl-[2px] leading-[15px] text-[#333]">重复</span><span role="option" class="block h-[17px] pl-[3px]">唯一</span></span>
    </label>
    <span class="ml-[6px] w-[57px]">值,设置为</span>
    <label class="flex h-full w-[200px] items-center border border-[#adadad] bg-[#e1e1e1] pr-[5px]"><select aria-label="设置为" class="min-w-0 flex-1 appearance-none pl-[3px]"><option>浅红填充色深红色文本</option></select><svg class="h-1 w-2" viewBox="0 0 8 4"><path d="M0 0h8L4 4Z"/></svg></label>
  </div>
  <div class="mr-3 mt-4 flex justify-end gap-2">
    <button class="h-[30px] w-[77px] border-2 border-[#0078d7] bg-[#e1e1e1]">确定</button>
    <button class="h-[30px] w-[77px] border border-[#adadad] bg-[#e1e1e1]">取消</button>
  </div>
</div>

<!-- Callout arrows and mouse pointer -->
<svg class="pointer-events-none absolute left-[640px] top-[400px] h-[180px] w-[340px] drop-shadow-[2px_3px_1px_rgba(0,0,0,0.5)]" viewBox="0 0 340 180">
  <g fill="#fb0808" stroke="#b01010" stroke-width=".6">
    <path d="M125 17 98 20.500l5 4L12.500 58.500l1 3L104.500 27.500l1.500 5Z"/>
    <path d="M253 26 231 42l6 1L194.500 91.500l2.500 2L239.500 45l2 6Z"/>
    <path d="M315 74 297 94l6.500-.5L264.500 161l3 1.500L306.500 95l4 6Z"/>
  </g>
  <path d="M172.500 32v15l3.500-3 2.500 6 3-1.500-2.500-5.500h4.500Z" fill="#fff" stroke="#000" stroke-width=".9"/>
</svg>

<script>
const widths = [23,69,89,69,69,69,69,69,69,76,76,69,69,69,69,103,54,116,236,0];
const letters = 'ABCDEFGHIJKLMNOQRST';
document.getElementById('cols').innerHTML = widths.map(w => w ? `<col style="width:${w}px">` : '<col>').join('');
document.getElementById('heads').innerHTML =
  '<th class="h-[15px] border-b border-[#d4d4d4] bg-[#ededed] p-0"><svg class="ml-2 h-[5px] w-[6px]" viewBox="0 0 6 5"><path d="M6 0v5H0Z" fill="#555"/></svg></th>' +
  [...letters].map(c => c === 'H'
    ? '<th class="h-[15px] border-b-2 border-[#429020] bg-[#d9d9d9] p-0 pt-px text-[9px] font-normal leading-3 text-[#087f55]">H</th>'
    : `<th class="h-[15px] border-b border-r border-[#d4d4d4] bg-[#ededed] p-0 pt-[2px] text-[9px] font-normal leading-3 text-[#555]">${c}</th>`).join('');

const data = `编号|岗位|工号|姓名|性别|年龄|学历|省|市|考核成绩|等级|出勤天数|奖金|薪资|薪资高于5000
A01|技术员|1|小王|女|28|本科|湖北省|武汉市|66|及格|20|0|7,800|TRUE
A02|员工|24|郑二|女|24|本科|湖南省|长沙市|99|优秀|21|200|3,900|FALSE
A03|员工|2|小张|男|30|专科|山东省|青岛市|90|优秀|21|200|4,100|FALSE
A03|技术员|3|陈一|女|22|本科|湖南省|长沙市|88
A04|工程师|4|小G|女|30|硕士|吉林省|长春市|77
A05|工程师|5|小F|女|22|专科|辽宁省|沈阳市|76
A06|助工|6|小明|男|28|本科|江苏省|南京市|50
A07|技术员|7|李四|男|36|本科|四川省|成都市|62
A08|员工|8|小A|男|22|本科|湖北省|武汉市|66|及格|22|0|4,100|FALSE
A09|员工|9|赵六|男|22|本科|吉林省|长春市|80|良好|22|200|4,600|FALSE
A10|技术员|10|王五|女|33|硕士|四川省|成都市|89|良好|22|200|4,300|FALSE
A11|员工|11|张三|女|25|专科|吉林省|长春市|99|优秀|22|200|5,100|TRUE
A12|员工|12|小E|男|25|本科|吉林省|长春市|67|及格|22|0|4,400|FALSE
A14|技术员|13|小D|女|36|硕士|四川省|成都市|78|及格|23|200|5,100|TRUE
A15|技术员|14|杨十四|女|33|专科|湖北省|武汉市|99|优秀|23|200|5,300|TRUE
A16|员工|15|小C|男|22|硕士|湖南省|长沙市|76|及格|23|200|5,000|FALSE
A17|技术员|16|李六|女|28|硕士|辽宁省|沈阳市|85|良好|23|200|8,000|TRUE
A18|技术员|17|小B|男|22|专科|江苏省|南京市|66|及格|24|200|4,600|FALSE
A19|员工|18|冯十|男|28|专科|四川省|成都市|64|及格|24|200|5,400|TRUE
A20|技术员|19|吴九|女|22|硕士|福建省|厦门市|57|不及格|25|200|9,000|TRUE
A21|技术员|20|小红|男|26|专科|江苏省|南京市|78|及格|21|0|5,900|TRUE
A22|助工|21|孙七|男|30|本科|山东省|青岛市|88|良好|26|200|4,900|FALSE
A23|技术员|22|小李|男|22|硕士|山东省|青岛市|67|及格|26|200|6,000|TRUE
A24|工程师|23|小韦|男|36|硕士|福建省|厦门市|78|及格|28|200|10,100|TRUE`.split('\n').map(r => r.split('|'));

// Summary blocks in columns R and S, keyed by row number
const side = {5:['年龄段','人数'],6:['20-30','16'],7:['30-40','8'],12:['性别','人数'],13:['男','12'],14:['女','12'],19:['考核成绩平均值','76.88']};
const cell = 'border-b border-r border-[#e2e2e2] p-0 text-sm leading-5 pt-[2px] whitespace-nowrap text-[#222]';
const picked = 'border-b border-r border-[#cfcfcf] bg-[#e6e6e6] p-0 text-sm leading-5 pt-[2px] whitespace-nowrap text-[#222]';
const bold = 'border-b border-r border-[#e2e2e2] p-0 text-[15px] leading-5 pt-px whitespace-nowrap font-bold text-black';
const serif = "border-b border-r border-[#e2e2e2] p-0 text-base leading-5 font-bold text-black font-['Liberation_Serif',serif]";
const sans = 'border-b border-r border-[#e2e2e2] p-0 text-sm leading-5 pt-[2px] font-medium text-black';
const sansBold = 'border-b border-r border-[#e2e2e2] p-0 text-sm leading-5 pt-[2px] font-bold text-black';
let html = '';
for (let r = 1; r <= 31; r++) {
  const sel = r >= 3 && r <= 26;
  const h = r === 28 ? 'h-[38px]' : 'h-[25px]';
  html += `<tr class="${h}">` + (sel
    ? `<th class="border-b border-[#c8c8c8] bg-[#d9d9d9] p-0 pt-[2px] text-[8px] font-normal leading-3 text-[#087f55] shadow-[inset_-2px_0_0_#429020]">${r}</th>`
    : `<th class="border-b border-r border-[#d4d4d4] bg-[#ededed] p-0 pt-[2px] text-[8px] font-normal leading-3 text-[#555]">${r < 31 ? r : ''}</th>`);
  let start = 0;
  if (r === 1) { html += `<td colspan="15" class="${cell}">XXX公司员工信息</td>`; start = 15; }
  for (let c = start; c < 19; c++) {
    let text = (data[r - 2] || [])[c] || '', cls = cell;
    if (c === 7 && r > 3 && sel) cls = picked;
    if (c >= 16 && c <= 17 && side[r]) {
      text = side[r][c - 16];
      const digits = /^[\d.-]+$/.test(text);
      cls = c === 17 && r < 8 ? (digits ? sansBold : sans) : digits ? serif : bold;
    }
    html += `<td class="${cls}">${text}</td>`;
  }
  html += '</tr>';
}
document.getElementById('grid').innerHTML = html;
</script>
</body>
</html>
